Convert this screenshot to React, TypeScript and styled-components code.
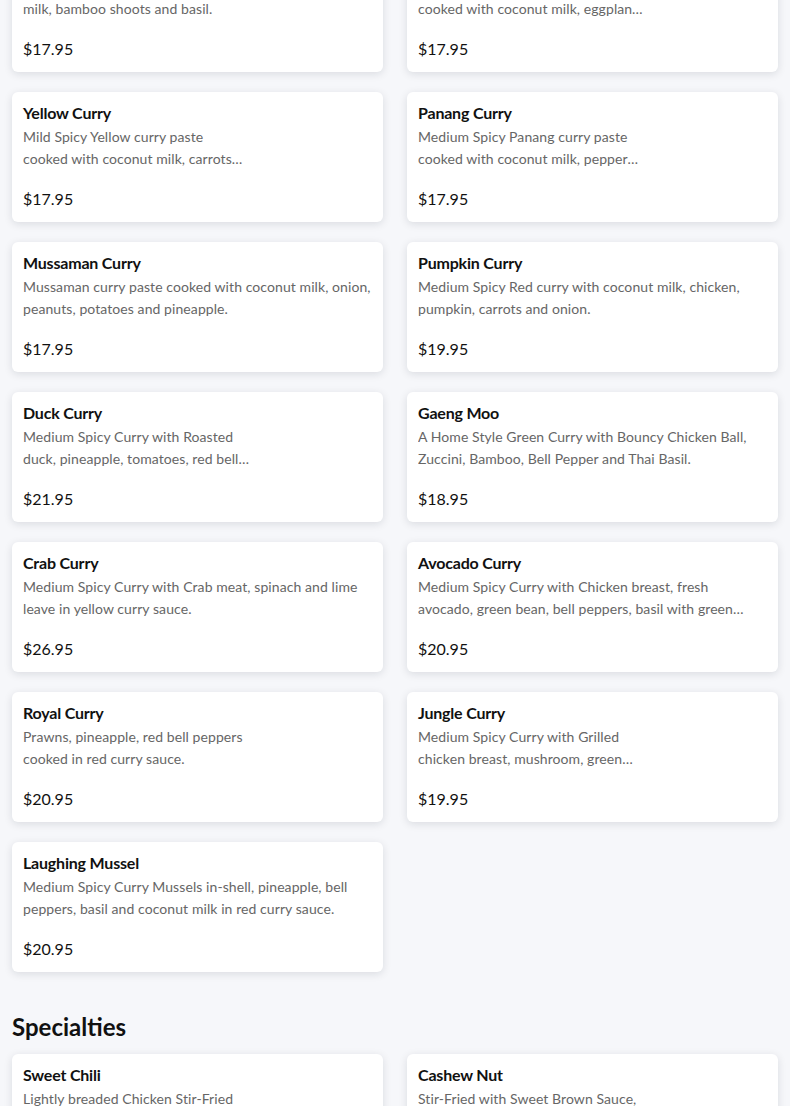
import React from "react";
import styled, { createGlobalStyle } from "styled-components";

const Global = createGlobalStyle`
  html, body { margin: 0; padding: 0; background: #f6f7fa; }
  body { font-family: Lato, "Open Sans", sans-serif; color: #111; overflow: hidden; }
`;

const Page = styled.main`
  margin-top: -58px;
  padding: 0 12px 40px;
`;

const Section = styled.section`
  & + & { margin-top: 40px; }
`;

const Heading = styled.h2`
  margin: 0 0 13px;
  font-size: 24px;
  line-height: 29px;
  font-weight: 700;
  color: #111;
`;

const Grid = styled.div`
  display: grid;
  grid-template-columns: repeat(2, minmax(0, 1fr));
  column-gap: 24px;
  row-gap: 20px;
`;

const Card = styled.article`
  min-width: 0;
  height: 130px;
  box-sizing: border-box;
  background: #fff;
  border-radius: 6px;
  box-shadow: 0 2px 8px rgba(20, 25, 40, 0.12);
  padding: 11px 11px 13px;
  display: flex;
  flex-direction: column;
`;

const Title = styled.h3`
  margin: 0;
  font-size: 16px;
  line-height: 20px;
  font-weight: 700;
  color: #111;
  letter-spacing: -0.2px;
`;

const Desc = styled.p<{ $narrow?: boolean }>`
  margin: 3px 0 0;
  max-width: ${(p) => (p.$narrow ? "227px" : "100%")};
  font-size: 14px;
  line-height: 22px;
  letter-spacing: 0.08px;
  color: #666;
  display: -webkit-box;
  -webkit-line-clamp: 2;
  -webkit-box-orient: vertical;
  overflow: hidden;
`;

const Price = styled.div`
  margin-top: auto;
  font-size: 16px;
  line-height: 20px;
  color: #111;
`;

type Item = { name: string; desc: string; price: string; narrow?: boolean };

const curries: Item[] = [
  { name: "Red Curry", desc: "Medium Spicy Red curry paste cooked with coconut milk, bamboo shoots and basil.", price: "$17.95" },
  { name: "Green Curry", desc: "Medium Spicy Green curry paste cooked with coconut milk, eggplant, bamboo shoots, bell pepper and basil.", price: "$17.95", narrow: true },
  { name: "Yellow Curry", desc: "Mild Spicy Yellow curry paste cooked with coconut milk, carrots and potatoes.", price: "$17.95", narrow: true },
  { name: "Panang Curry", desc: "Medium Spicy Panang curry paste cooked with coconut milk, pepper and kaffir lime leaves.", price: "$17.95", narrow: true },
  { name: "Mussaman Curry", desc: "Mussaman curry paste cooked with coconut milk, onion, peanuts, potatoes and pineapple.", price: "$17.95" },
  { name: "Pumpkin Curry", desc: "Medium Spicy Red curry with coconut milk, chicken, pumpkin, carrots and onion.", price: "$19.95" },
  { name: "Duck Curry", desc: "Medium Spicy Curry with Roasted duck, pineapple, tomatoes, red bell peppers and basil.", price: "$21.95", narrow: true },
  { name: "Gaeng Moo", desc: "A Home Style Green Curry with Bouncy Chicken Ball, Zuccini, Bamboo, Bell Pepper and Thai Basil.", price: "$18.95" },
  { name: "Crab Curry", desc: "Medium Spicy Curry with Crab meat, spinach and lime leave in yellow curry sauce.", price: "$26.95" },
  { name: "Avocado Curry", desc: "Medium Spicy Curry with Chicken breast, fresh avocado, green bean, bell peppers, basil with green curry sauce.", price: "$20.95" },
  { name: "Royal Curry", desc: "Prawns, pineapple, red bell peppers cooked in red curry sauce.", price: "$20.95", narrow: true },
  { name: "Jungle Curry", desc: "Medium Spicy Curry with Grilled chicken breast, mushroom, green beans, bamboo and basil.", price: "$19.95", narrow: true },
  { name: "Laughing Mussel", desc: "Medium Spicy Curry Mussels in-shell, pineapple, bell peppers, basil and coconut milk in red curry sauce.", price: "$20.95" },
];

const specialties: Item[] = [
  { name: "Sweet Chili", desc: "Lightly breaded Chicken Stir-Fried with sweet chili sauce and bell peppers.", price: "$18.95", narrow: true },
  { name: "Cashew Nut", desc: "Stir-Fried with Sweet Brown Sauce, cashew nuts, onion and bell peppers.", price: "$18.95", narrow: true },
];

const MenuCard = ({ item }: { item: Item }) => (
  <Card>
    <Title>{item.name}</Title>
    <Desc $narrow={item.narrow}>{item.desc}</Desc>
    <Price>{item.price}</Price>
  </Card>
);

export default function App() {
  return (
    <>
      <Global />
      <Page>
        <Section>
          <Grid>
            {curries.map((c) => (
              <MenuCard key={c.name} item={c} />
            ))}
          </Grid>
        </Section>
        <Section>
          <Heading>Specialties</Heading>
          <Grid>
            {specialties.map((c) => (
              <MenuCard key={c.name} item={c} />
            ))}
          </Grid>
        </Section>
      </Page>
    </>
  );
}
